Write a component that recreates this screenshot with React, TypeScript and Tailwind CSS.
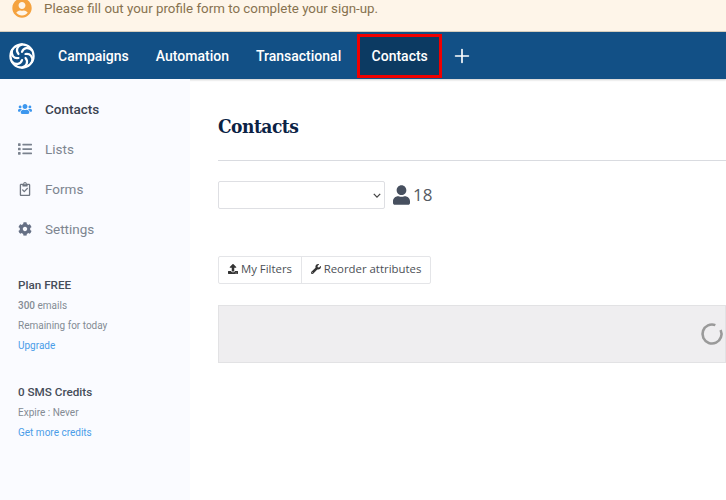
import { FaCheck, FaCog, FaList, FaRegClipboard, FaUpload, FaUser, FaUserCircle, FaUsers, FaWrench } from "react-icons/fa";
import { Plus } from "lucide-react";

const navItems = ["Campaigns", "Automation", "Transactional"];

const Logo = () => (
    <svg viewBox="0 0 26 26" className="h-[26px] w-[26px]" fill="none" stroke="white" strokeWidth="2.2" strokeLinecap="round">
        <circle cx="13" cy="13" r="11.6" />
        {[0, 60, 120, 180, 240, 300].map((angle) => (
            <path key={angle} d="M13 1.400C8 3 6.500 7.500 9.500 11" transform={`rotate(${angle} 13 13)`} />
        ))}
    </svg>
);

const Sidebar = () => (
    <aside className="h-[421px] w-[190px] shrink-0 bg-[#fafbff] pt-[10px] pl-[18px] font-['Roboto',sans-serif]">
        <div className="flex h-10 items-center text-[13.5px] font-medium text-[#3b4350]">
            <FaUsers className="mr-[13px] h-[14px] w-[14px] text-[#3d97ee]" />
            Contacts
        </div>
        <div className="flex h-10 items-center text-[13.5px] text-[#7d8590]">
            <FaList className="mr-[13px] h-[14px] w-[14px] text-[#7a828e]" />
            Lists
        </div>
        <div className="flex h-10 items-center text-[13.5px] text-[#7d8590]">
            <span className="relative mr-[13px] flex h-[14px] w-[14px] items-center justify-center">
                <FaRegClipboard className="h-[14px] w-[14px] text-[#6f7681]" />
                <FaCheck className="absolute top-[5px] left-[4px] h-[6px] w-[6px] text-[#6f7681]" />
            </span>
            Forms
        </div>
        <div className="flex h-10 items-center text-[13.5px] text-[#7d8590]">
            <FaCog className="mr-[13px] h-[14px] w-[14px] text-[#667085]" />
            Settings
        </div>
        <div className="mt-[26px] text-[10px] leading-5 text-[#848b94]">
            <div className="mb-px text-[11.7px] leading-5 font-medium text-[#464d59]">Plan FREE</div>
            <div><span className="font-medium">300</span> emails</div>
            <div>Remaining for today</div>
            <div className="text-[#4a9de8]">Upgrade</div>
        </div>
        <div className="mt-[26px] text-[10px] leading-5 text-[#848b94]">
            <div className="mb-px text-[11.7px] leading-5 font-medium text-[#464d59]">0 SMS Credits</div>
            <div>Expire : Never</div>
            <div className="text-[#4a9de8]">Get more credits</div>
        </div>
    </aside>
);

const App = () => {
    return (
        <div className="h-[500px] w-[726px] overflow-hidden bg-white">
            <div className="flex h-8 items-start overflow-hidden border-b border-[#d8d0bf] bg-[#fef5e9] pl-3 font-['Roboto',sans-serif]">
                <FaUserCircle className="-mt-[2px] h-5 w-5 text-[#f5a340]" />
                <span className="ml-3 text-[13.33px] leading-[18px] text-[#87724f]">
                    Please fill out your profile form to complete your sign-up.
                </span>
            </div>
            <nav className="flex h-[47px] items-center bg-[#125086] pl-[9px] font-['Roboto',sans-serif] text-sm font-medium text-white shadow-[0_1px_2px_rgba(0,0,0,0.2)]">
                <Logo />
                <div className="ml-[23px] flex items-center gap-[27px]">
                    {navItems.map((item) => (
                        <span key={item}>{item}</span>
                    ))}
                </div>
                <span className="ml-[16px] flex h-[44px] w-[85px] items-center justify-center border-[3px] border-[#f00000] bg-[#0c3a62]">
                    Contacts
                </span>
                <Plus className="ml-[9px] h-[22px] w-[22px]" strokeWidth={1.8} />
            </nav>
            <div className="flex">
                <Sidebar />
                <main className="min-w-0 flex-1 pl-[28px] font-['Open_Sans',sans-serif]">
                    <h1 className="mt-[34px] font-['DejaVu_Serif_Condensed','DejaVu_Serif',serif] text-[19px] leading-[26px] font-bold tracking-[-0.5px] text-[#0b2245]">
                        Contacts
                    </h1>
                    <div className="mt-[21px] h-px bg-[#d9dbe0]" />
                    <div className="mt-[20px] flex items-center">
                        <div className="flex h-[28px] w-[167px] items-center justify-end rounded-[2px] border border-[#dedfe3] bg-white pr-[3px]">
                            <svg viewBox="0 0 10 6" className="h-[5px] w-[8px]" fill="none" stroke="#444" strokeWidth="1.6">
                                <path d="M1 1l4 4 4-4" />
                            </svg>
                        </div>
                        <FaUser className="ml-[8px] h-[20px] w-[17px] text-[#47505f]" />
                        <span className="ml-[3px] pb-[2px] text-[17px] leading-none text-[#565b63]">18</span>
                    </div>
                    <div className="mt-[47px] flex h-[28px] w-[213px] rounded-[2px] border border-[#e4e5e8] text-[11.4px] text-[#4b4f56]">
                        <span className="flex w-[83px] items-center justify-center border-r border-[#e4e5e8] pb-[2px]">
                            <FaUpload className="mr-[3px] h-[10px] w-[10px] text-[#333]" />
                            My Filters
                        </span>
                        <span className="flex flex-1 items-center justify-center pb-[2px]">
                            <FaWrench className="mr-[3px] h-[10px] w-[10px] text-[#333]" />
                            Reorder attributes
                        </span>
                    </div>
                    <div className="relative mt-[21px] h-[58px] border border-[#e2e2e4] bg-[#efeef0]">
                        <svg viewBox="0 0 24 24" className="absolute top-[16px] left-[481px] h-[24px] w-[24px]" fill="none" stroke="#9a9a9a" strokeWidth="2.6">
                            <circle cx="12" cy="12" r="9.500" strokeDasharray="52 7.700" transform="rotate(-25 12 12)" />
                        </svg>
                    </div>
                </main>
            </div>
        </div>
    );
};

export default App;
